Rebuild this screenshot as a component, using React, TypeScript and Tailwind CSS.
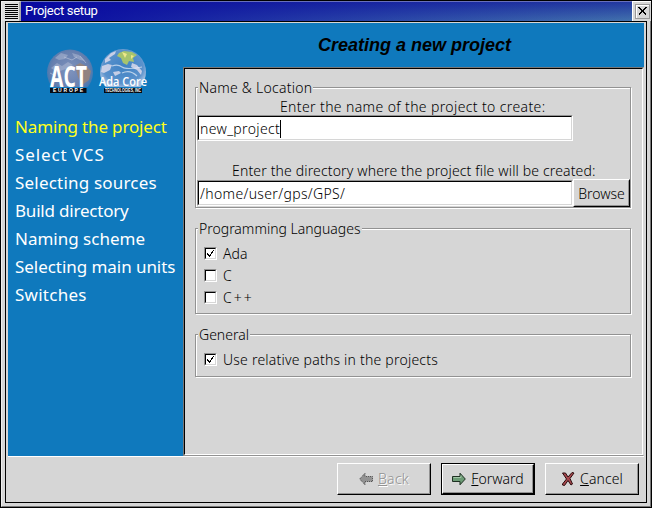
import type { ReactNode } from "react";

const steps = [
  { label: "Naming the project", fit: "tracking-[-0.15px]" },
  { label: "Select VCS", fit: "tracking-[0.9px] [word-spacing:-1px]" },
  { label: "Selecting sources", fit: "tracking-[0.2px]" },
  { label: "Build directory", fit: "tracking-[-0.2px]" },
  { label: "Naming scheme", fit: "tracking-[0px]" },
  { label: "Selecting main units", fit: "tracking-[-0.05px]" },
  { label: "Switches", fit: "tracking-[0.25px]" },
];

function Logos() {
  return (
    <svg className="block" width="110" height="50" viewBox="44 46 110 50">
      <defs>
        <radialGradient id="earth" cx="50%" cy="45%" r="55%">
          <stop offset="0" stopColor="#7f93bd" />
          <stop offset="0.75" stopColor="#667fae" />
          <stop offset="1" stopColor="#3977b2" />
        </radialGradient>
        <radialGradient id="ocean" cx="50%" cy="50%" r="52%">
          <stop offset="0" stopColor="#3f82c4" />
          <stop offset="0.8" stopColor="#5b92cc" />
          <stop offset="1" stopColor="#9dbbdf" />
        </radialGradient>
        <clipPath id="left"><path d="M45 46h50v41h-50z" /></clipPath>
        <clipPath id="right"><circle cx="123" cy="72" r="23" /></clipPath>
      </defs>
      <g clipPath="url(#left)">
        <circle cx="70" cy="72.500" r="23" fill="url(#earth)" />
        <path d="M55 58l6-5 7 2-3 4-6 1zM72 53l7 2 6 6-5-1-6-3zM51 68l6-5 5 3 6-4 5 3-7 4-9 3z" fill="#b4bed6" opacity=".5" />
        <path d="M75 66l5-3 6 3 5 5-2 9-7 5-4-8z" fill="#9c8576" opacity=".8" />
        <path d="M64 57l8 3 5-3M50 73l6 3M80 56l6 7" stroke="#d0d6e5" strokeWidth="1" opacity=".5" fill="none" />
      </g>
      <g clipPath="url(#right)">
        <rect x="99" y="47" width="48" height="40" fill="url(#ocean)" />
        <path d="M105 59l6-6 5-2-1 3-6 4 2 2-6 3zM102 66l6-2 4 1-2 5-6 3-3-1zM113 72l6-1 2 2-6 3zM132 63l5 2 5 6-1 4-4-5-6-3z" fill="#e3dfee" opacity=".8" />
        <path d="M119 53l5-2 8 1 5 3-4 3 1 4-5-1-2 4-4-2-2-5-4-2z" fill="#a7c46e" />
        <path d="M122 52l5 2-2 4zM131 55l3 1-3 3z" fill="#efe88a" />
        <path d="M112 66q6-2 10 1t20 0M122 73q8-4 15 3" stroke="#f0f5fb" strokeWidth="1.200" fill="none" opacity=".65" />
      </g>
      <text x="50" y="87" textLength="37" lengthAdjust="spacingAndGlyphs" fontSize="29" className="fill-white font-['Open_Sans',sans-serif] font-bold">ACT</text>
      <rect x="50" y="88" width="36.500" height="5" fill="#050a12" />
      <text x="53" y="92.200" textLength="30" fontSize="5" className="fill-white font-['Liberation_Sans',sans-serif] font-bold">EUROPE</text>
      <text x="99" y="86" textLength="48" lengthAdjust="spacingAndGlyphs" fontSize="13" className="fill-white font-['Open_Sans',sans-serif] font-semibold">Ada Core</text>
      <rect x="104" y="88" width="38" height="5" fill="#050a12" />
      <text x="105" y="92.200" textLength="36" lengthAdjust="spacingAndGlyphs" fontSize="4.800" className="fill-white font-['Liberation_Sans',sans-serif] font-bold">TECHNOLOGIES, INC</text>
    </svg>
  );
}

function Frame({ title, fit, className, children }: { title: string; fit: string; className: string; children: ReactNode }) {
  return (
    <section className={`w-[436px] border border-[#929292] shadow-[inset_1px_1px_0_#fff,1px_1px_0_#fff] ${className}`}>
      <div className="-mt-[9px] flex">
        <h2 className={`ml-[2px] h-[18px] bg-[#d6d6d6] px-px leading-[18px] whitespace-nowrap ${fit}`}>{title}</h2>
      </div>
      {children}
    </section>
  );
}

function Entry({ children, className }: { children: ReactNode; className: string }) {
  return (
    <div className={`w-[376px] shrink-0 border border-t-[#929292] border-l-[#929292] border-r-white border-b-white ${className}`}>
      <div className="flex h-full items-center border border-t-black border-l-black border-r-[#d6d6d6] border-b-[#d6d6d6] bg-white pt-[2px] pl-px">
        {children}
      </div>
    </div>
  );
}

function Check({ label, checked = false, fit }: { label: string; checked?: boolean; fit: string }) {
  return (
    <div className="flex h-[22px] items-center gap-[6px]">
      <span className="block size-[13px] -translate-y-px border border-t-[#929292] border-l-[#929292] border-r-white border-b-white">
        <span className="block size-[11px] border border-t-black border-l-black border-r-[#d6d6d6] border-b-[#d6d6d6] bg-white">
          {checked && (
            <svg className="block" width="9" height="9" viewBox="0 0 9 9">
              <path d="M1 4h1v1h1v1h1v-1h1v-2h1v-1h1v-1h1v1h-1v2h-1v1h-1v2h-1v1h-1v-1h-1v-1h-1z" fill="#000" />
            </svg>
          )}
        </span>
      </span>
      <span className={`whitespace-nowrap ${fit}`}>{label}</span>
    </div>
  );
}

function ButtonFace({ children }: { children: ReactNode }) {
  return (
    <div className="flex h-full items-center justify-center gap-[5px] border border-t-white border-l-white border-r-black border-b-black shadow-[inset_-1px_-1px_0_#929292]">
      {children}
    </div>
  );
}

export default function App() {
  return (
    <div className="flex h-[508px] w-[652px] flex-col overflow-hidden border border-black bg-[#d6d6d6] font-['Noto_Sans',sans-serif] text-[14px] leading-[18px] font-light text-black">
      <header className="flex h-[20px] shrink-0">
        <div className="flex w-[20px] border-t border-l border-[#eee] border-r-2 border-r-[#aaa] bg-[#dedede] py-px">
          <div className="ml-[3px] mt-px flex h-[15px] w-[13px] flex-col gap-px">
            {[0, 1, 2, 3, 4, 5, 6, 7].map((n) => (
              <i key={n} className="block h-px bg-black" />
            ))}
          </div>
        </div>
        <div className="flex flex-1 items-center border-t border-[#6870bb] bg-[linear-gradient(to_right,#0808a0,#0808a000),linear-gradient(to_bottom,#2238a0,#4272ad)] pl-[4px]">
          <h1 className="pb-[2px] font-['Roboto',sans-serif] text-[13px] font-normal tracking-[-0.3px] text-white">Project setup</h1>
        </div>
        <div className="flex w-[19px] items-center justify-center border-t border-l border-white bg-[#d6d6d6]">
          <div className="flex size-[15px] items-center justify-center border border-[#999] shadow-[inset_1px_1px_#fff]">
            <svg width="9" height="9" viewBox="0 0 9 9" shapeRendering="crispEdges">
              <path d="M0.500 0.500l8 8M8.500 0.500l-8 8M1.500 0.500l7 7M7.500 0.500l-7 7" stroke="#000" />
            </svg>
          </div>
        </div>
      </header>

      <div className="flex min-h-0 flex-1 border-r border-b border-[#777] border-l border-l-[#eee] pr-[3px] pb-[3px] pl-[3px]">
        <div className="flex flex-1 flex-col border border-black pr-[2px] pl-[2px] pt-px">
          <div className="flex h-[433px] shrink-0 bg-[#0f79bd]">
            <aside className="flex w-[175px] flex-col">
              <div className="mt-[23px] ml-[36px] h-[67px]">
                <Logos />
              </div>
              <ul className="ml-[7px] text-[17px] leading-[28px] font-normal whitespace-nowrap text-white">
                {steps.map((step, n) => (
                  <li key={step.label} className={n === 0 ? `text-[#ffff20] ${step.fit}` : step.fit}>
                    {step.label}
                  </li>
                ))}
              </ul>
            </aside>
            <main className="flex flex-1 flex-col">
              <div className="flex h-[44px] items-center justify-center pl-[2px]">
                <h2 className="font-['Liberation_Sans',sans-serif] text-[18px] font-bold whitespace-nowrap italic">Creating a new project</h2>
              </div>
              <div className="flex-1 border border-t-[#777] border-r-[#d6d6d6] border-b-[#929292] border-l-[#777]">
                <div className="h-full border border-t-black border-r-white border-b-white border-l-black bg-[#d6d6d6] pt-[18px] pl-[10px]">
                  <Frame title="Name & Location" fit="tracking-[0.25px]" className="h-[121px]">
                    <p className="ml-[84px] h-[18px] pt-px tracking-[0.38px] whitespace-nowrap">Enter the name of the project to create:</p>
                    <Entry className="ml-px h-[26px]">
                      <span className="tracking-[0.35px]">new_project</span>
                      <i className="block h-[18px] w-px bg-black" />
                    </Entry>
                    <p className="mt-[21px] ml-[36px] h-[17px] tracking-[0.15px] whitespace-nowrap">Enter the directory where the project file will be created:</p>
                    <div className="ml-px flex items-center">
                      <Entry className="h-[26px]">
                        <span className="tracking-[0.35px]">/home/user/gps/GPS/</span>
                      </Entry>
                      <div className="h-[28px] w-[58px] border border-t-white border-r-black border-b-black border-l-white">
                        <div className="flex h-full items-center justify-center border border-t-[#d6d6d6] border-r-[#929292] border-b-[#929292] border-l-[#d6d6d6] pt-[2px]">Browse</div>
                      </div>
                    </div>
                  </Frame>
                  <Frame title="Programming Languages" fit="tracking-[0px]" className="mt-[20px] h-[86px]">
                    <div className="mt-[5px] ml-[8px]">
                      <Check label="Ada" checked fit="tracking-[0.1px]" />
                      <Check label="C" fit="tracking-[0px]" />
                      <Check label="C++" fit="tracking-[2px]" />
                    </div>
                  </Frame>
                  <Frame title="General" fit="tracking-[0px]" className="mt-[20px] h-[43px]">
                    <div className="mt-[5px] ml-[8px]">
                      <Check label="Use relative paths in the projects" checked fit="tracking-[0.22px]" />
                    </div>
                  </Frame>
                </div>
              </div>
            </main>
          </div>
          <footer className="flex flex-1 justify-end gap-[10px] border-t border-white pt-[6px] pr-[5px]">
            <div className="h-[32px] w-[94px] text-[#929292]">
              <ButtonFace>
                <svg width="14" height="14" viewBox="0 0 14 14">
                  <path d="M0.700 7L6 1.200V4.500H13.500V9.500H6V12.800Z" fill="#929292" stroke="#444" strokeDasharray="1 1" />
                </svg>
                <span className="tracking-[0.3px] [text-shadow:1px_1px_#fff]"><u>B</u>ack</span>
              </ButtonFace>
            </div>
            <div className="h-[32px] w-[94px] border border-black">
              <ButtonFace>
                <svg width="14" height="14" viewBox="0 0 14 14">
                  <path d="M13.300 7L8 1.200V4.500H0.500V9.500H8V12.800Z" fill="#6c9b75" stroke="#1e3022" />
                  <path d="M1.500 5.500H9V3.500" fill="none" stroke="#a3c5a8" />
                </svg>
                <span><u>F</u>orward</span>
              </ButtonFace>
            </div>
            <div className="h-[32px] w-[94px]">
              <ButtonFace>
                <svg width="14" height="14" viewBox="0 0 14 14">
                  <path d="M1.500 1h3l2.500 4 4-4.500 2 .5-4 5.500 2.500 5.500-1.500 1-3-4.500-3.500 5-2-.5V12l4-5z" fill="#a8484e" stroke="#2a0b0d" />
                </svg>
                <span className="tracking-[0.1px]"><u>C</u>ancel</span>
              </ButtonFace>
            </div>
          </footer>
        </div>
      </div>
    </div>
  );
}
